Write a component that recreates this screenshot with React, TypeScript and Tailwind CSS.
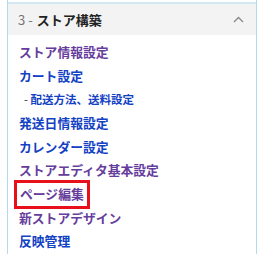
const purple = "text-[#663d9c]";
const blue = "text-[#1241c4]";

const items: { label: string; visited?: boolean; sub?: boolean; boxed?: boolean }[] = [
  { label: "ストア情報設定", visited: true },
  { label: "カート設定" },
  { label: "配送方法、送料設定", sub: true },
  { label: "発送日情報設定" },
  { label: "カレンダー設定" },
  { label: "ストアエディタ基本設定", visited: true },
  { label: "ページ編集", visited: true, boxed: true },
  { label: "新ストアデザイン", visited: true },
  { label: "反映管理" },
];

export default function App() {
  return (
    <div
      className="w-[272px] h-[254px] overflow-hidden bg-white"
      style={{ fontFamily: '"Noto Sans CJK JP", "Noto Sans", sans-serif' }}
    >
      <div className="ml-[7px] w-[250px] border-x border-[#b5d9ee]">
        <div className="h-[4px] border-b-2 border-[#d3e8f4]" />
        <div className="h-[31px] bg-[#f3f3f3] flex items-center pl-[10px] pr-[8px]">
          <span className="text-[13px] text-[#777]">3 - </span>
          <span className="ml-[4px] text-[13px] font-bold text-[#222]">ストア構築</span>
          <svg className="ml-auto mr-[4px]" width="11" height="7" viewBox="0 0 11 7">
            <path d="M1 6 L5.5 1.5 L10 6" fill="none" stroke="#888" strokeWidth="1.3" />
          </svg>
        </div>
        <ul className="pt-[6px] pb-[4px] pl-[11px]">
          {items.map((it) => (
            <li key={it.label} className="h-[23.6px] flex items-center">
              {it.sub ? (
                <span className="pl-[5px] text-[11.5px] font-bold">
                  <span className="font-normal text-[#333]">- </span>
                  <a className={blue}>{it.label}</a>
                </span>
              ) : (
                <a
                  className={
                    "text-[12.8px] font-bold leading-none " +
                    (it.visited ? purple : blue) +
                    (it.boxed ? " -ml-[5px] border-[3px] border-[#e8101a] px-[3px] py-[5px]" : "")
                  }
                >
                  {it.label}
                </a>
              )}
            </li>
          ))}
        </ul>
      </div>
    </div>
  );
}
